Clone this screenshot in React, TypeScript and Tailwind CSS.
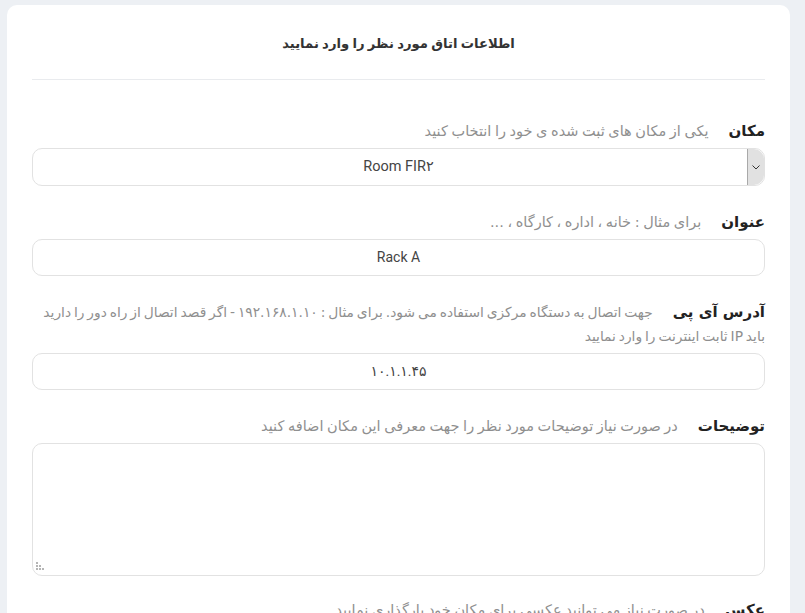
import React from "react";

const font = { fontFamily: "Roboto, 'DejaVu Sans', sans-serif" };
const fa = { fontFamily: "'DejaVu Sans', sans-serif" };

function FieldLabel({ label, hint, hintClass = "text-[14.5px] [word-spacing:-1px]" }: { label: string; hint: React.ReactNode; hintClass?: string }) {
  return (
    <div className="mb-[5px] text-right text-[14px] leading-[24px]" style={fa}>
      <span className="float-right ml-[20px] text-[15px] font-bold leading-[24px] text-[#222]">{label}</span>
      <span className={`${hintClass} leading-[24px] text-[#8f8f8f]`}>{hint}</span>
      <div className="clear-both" />
    </div>
  );
}

function Grip() {
  return (
    <svg width="9" height="9" viewBox="0 0 9 9" className="absolute bottom-[5px] left-[4px]">
      <rect x="0" y="0" width="2" height="2" fill="#b5b5b5" />
      <rect x="0" y="3" width="2" height="2" fill="#b5b5b5" />
      <rect x="3" y="3" width="2" height="2" fill="#b5b5b5" />
      <rect x="0" y="6" width="2" height="2" fill="#b5b5b5" />
      <rect x="3" y="6" width="2" height="2" fill="#b5b5b5" />
      <rect x="6" y="6" width="2" height="2" fill="#b5b5b5" />
    </svg>
  );
}

export default function App() {
  return (
    <div className="h-[613px] w-full overflow-hidden bg-[#edf0f4] pt-[5px] pl-[7px] pr-[15px]" style={font}>
      <div dir="rtl" className="rounded-t-[10px] bg-white px-[25px]">
        <div className="flex h-[74px] items-center justify-center pt-[4px]">
          <h1 className="text-[13.2px] font-bold text-[#333]">اطلاعات اتاق مورد نظر را وارد نمایید</h1>
        </div>
        <div className="h-px bg-[#e9ebee]" />
        <div className="pt-[39px]">
          <div className="mb-[24px]">
            <FieldLabel label="مکان" hint="یکی از مکان های ثبت شده ی خود را انتخاب کنید" />
            <div className="relative flex h-[38px] items-center justify-center rounded-[10px] border border-[#e2e2e2] bg-white">
              <span className="text-[14.5px] text-[#444]">Room FIR۲</span>
              <div className="absolute right-0 top-0 flex h-[36px] w-[17px] items-center justify-center rounded-r-[10px] border-l border-[#a9a9a9] bg-[#e1e1e1]">
                <svg width="8" height="5" viewBox="0 0 8 5">
                  <path d="M0.5 0.5 L4 4 L7.5 0.5" fill="none" stroke="#333" strokeWidth="1" />
                </svg>
              </div>
            </div>
          </div>
          <div className="mb-[24px]">
            <FieldLabel label="عنوان" hint="برای مثال : خانه ، اداره ، کارگاه ، ..." />
            <div className="flex h-[37px] items-center justify-center rounded-[10px] border border-[#e2e2e2] bg-white">
              <span className="text-[14px] text-[#444]">Rack A</span>
            </div>
          </div>
          <div className="mb-[24px]">
            <FieldLabel
              label="آدرس آی پی"
              hintClass="text-[13.8px] [word-spacing:-1.5px]"
              hint={
                <>
                  جهت اتصال به دستگاه مرکزی استفاده می شود. برای مثال : ۱۹۲.۱۶۸.۱.۱۰ - اگر قصد اتصال از راه دور را دارید
                  <br />
                  باید IP ثابت اینترنت را وارد نمایید
                </>
              }
            />
            <div className="flex h-[37px] items-center justify-center rounded-[10px] border border-[#e2e2e2] bg-white">
              <span className="text-[14px] text-[#444]">۱۰.۱.۱.۴۵</span>
            </div>
          </div>
          <div className="mb-[22px]">
            <FieldLabel label="توضیحات" hint="در صورت نیاز توضیحات مورد نظر را جهت معرفی این مکان اضافه کنید" />
            <div className="relative">
              <textarea
                dir="rtl"
                className="block h-[133px] w-full resize-none rounded-[10px] border border-[#e2e2e2] bg-white outline-none"
              />
              <Grip />
            </div>
          </div>
          <FieldLabel label="عکس" hint="در صورت نیاز می توانید عکسی برای مکان خود بارگذاری نمایید" />
        </div>
      </div>
    </div>
  );
}
